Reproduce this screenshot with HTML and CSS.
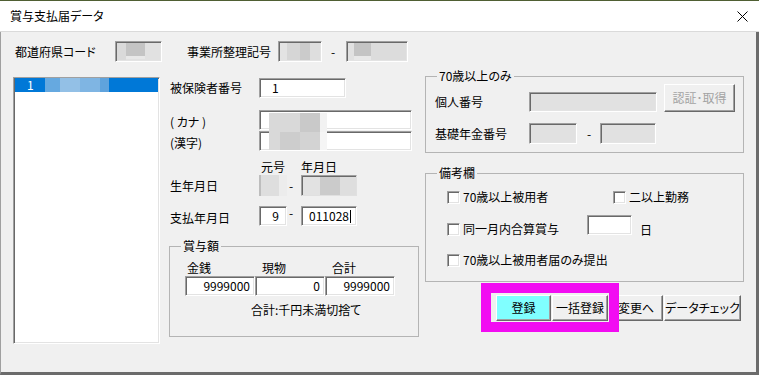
FILE: index.html
```html
<!DOCTYPE html>
<html lang="ja">
<head>
<meta charset="utf-8">
<title>賞与支払届データ</title>
<link rel="stylesheet" href="styles.css">
</head>
<body>
<div class="window">
  <div class="titlebar">
    <span class="title">賞与支払届データ</span>
    <span class="close"><svg width="11" height="11" viewBox="0 0 11 11"><path d="M0.5 0.5L10.5 10.5M10.5 0.5L0.5 10.5" stroke="#000" stroke-width="1" fill="none"/></svg></span>
  </div>
  <div class="client">
    <div class="toprow">
      <span class="lbl w-pref">都道府県コード</span>
      <span class="sunk f-pref"></span>
      <span class="lbl w-office">事業所整理記号</span>
      <span class="sunk f-office"></span>
      <span class="dash d-office">-</span>
      <span class="sunk f-office2"></span>
    </div>
    <div class="main">
      <div class="sunk listbox">
        <div class="item sel"><span class="num">1</span><span class="lb-redact"></span></div>
      </div>

      <div class="mid">
        <div class="row r-ins">
          <span class="lbl w-mid">被保険者番号</span>
          <span class="sunk f-ins">1</span>
        </div>
        <div class="names">
          <div class="nrow"><span class="lbl w-mid">( カナ )</span><span class="sunk f-name"></span></div>
          <div class="nrow"><span class="lbl w-mid">(漢字)</span><span class="sunk f-name"></span></div>
          <div class="name-redact"></div>
        </div>
        <div class="hdr"><span class="h-era">元号</span><span>年月日</span></div>
        <div class="row r-birth">
          <span class="lbl w-mid">生年月日</span>
          <span class="f-era-blur"></span>
          <span class="dash d-date">-</span>
          <span class="sunk f-ymd-blur"></span>
        </div>
        <div class="row r-pay">
          <span class="lbl w-mid l-pay">支払年月日</span>
          <span class="sunk f-era">9</span>
          <span class="dash d-date">-</span>
          <span class="sunk f-ymd">011028<span class="caret"></span></span>
        </div>
        <fieldset class="grp bonus">
          <legend>賞与額</legend>
          <div class="bhead"><span class="bh1">金銭</span><span class="bh2">現物</span><span class="bh3">合計</span></div>
          <div class="bfields">
            <span class="sunk f-amt">9999000</span>
            <span class="sunk f-amt">0</span>
            <span class="sunk f-amt">9999000</span>
          </div>
          <div class="note">合計:千円未満切捨て</div>
        </fieldset>
      </div>

      <div class="right">
        <fieldset class="grp g70">
          <legend>70歳以上のみ</legend>
          <div class="r-kojin">
            <span class="lbl w-right">個人番号</span>
            <span class="sunk dis f-kojin"></span>
            <span class="btn btn-dis b-auth">認証･取得</span>
          </div>
          <div class="r-kiso">
            <span class="lbl w-right">基礎年金番号</span>
            <span class="sunk dis f-kiso1"></span>
            <span class="dash d-kiso">-</span>
            <span class="sunk dis f-kiso2"></span>
          </div>
        </fieldset>
        <fieldset class="grp gnote">
          <legend>備考欄</legend>
          <div class="crow c1">
            <span class="citem ci-wide"><span class="sunk chk"></span>70歳以上被用者</span>
            <span class="citem"><span class="sunk chk"></span>二以上勤務</span>
          </div>
          <div class="crow c2">
            <span class="citem ci-mid"><span class="sunk chk"></span>同一月内合算賞与</span>
            <span class="sunk f-day"></span>
            <span class="day">日</span>
          </div>
          <div class="crow c3">
            <span class="citem"><span class="sunk chk"></span>70歳以上被用者届のみ提出</span>
          </div>
        </fieldset>
        <div class="buttons">
          <span class="btn b-reg">登録</span>
          <span class="btn b-bulk">一括登録</span>
          <span class="btn b-chg">変更へ</span>
          <span class="btn b-chk">データチェック</span>
        </div>
      </div>
    </div>
  </div>
  <div class="highlight"></div>
</div>
</body>
</html>
```

FILE: styles.css
```css
* { box-sizing: border-box; }
html, body { margin: 0; padding: 0; }
body {
  width: 759px;
  height: 375px;
  overflow: hidden;
  background: #fff;
  font-family: "Noto Sans CJK JP", "Noto Sans", sans-serif;
  font-size: 12px;
  line-height: 14px;
  color: #000;
  font-feature-settings: "palt";
}
.window {
  position: relative;
  width: 759px;
  height: 375px;
  display: flex;
  flex-direction: column;
}
.titlebar {
  height: 32px;
  flex: none;
  border-top: 1px solid #4f5f33;
  border-bottom: 1px solid #dadada;
  background: #fff;
  display: flex;
  align-items: center;
  padding-left: 10px;
}
.close {
  margin-left: auto;
  margin-right: 11px;
  width: 11px;
  height: 11px;
  display: flex;
}
.client {
  flex: 1;
  background: #f0f0f0;
  border-left: 1px solid #a0a0a0;
  border-right: 3px solid #6b6b6b;
  border-bottom: 3px solid #6b6b6b;
  padding: 9px 0 0 12px;
}

/* common controls */
.sunk {
  display: block;
  flex: none;
  border: 1px solid;
  border-color: #a0a0a0 #fff #fff #a0a0a0;
  box-shadow: inset 1px 1px 0 #696969, inset -1px -1px 0 #e3e3e3;
  background: #fff;
}
.dis { background: #e1e1e1; }
.lbl { flex: none; white-space: nowrap; }
.dash { flex: none; }
.btn {
  display: block;
  flex: none;
  height: 26px;
  line-height: 24px;
  text-align: center;
  white-space: nowrap;
  background: #f0f0f0;
  border: 1px solid;
  border-color: #fff #696969 #696969 #fff;
  box-shadow: inset -1px -1px 0 #a0a0a0;
}

/* top row */
.toprow {
  display: flex;
  align-items: center;
  height: 21px;
  padding-left: 2px;
}
.w-pref { width: 100px; }
.f-pref {
  width: 47px; height: 21px;
  background:
    linear-gradient(#c4c4c4, #c4c4c4) 10px 1px / 19px 13px no-repeat,
    linear-gradient(#e8e8e8, #e8e8e8) 10px 14px / 19px 3px no-repeat,
    linear-gradient(to right, #dadada 0 10px, #e1e1e1 10px);
}
.w-office { width: 91px; margin-left: 25px; }
.f-office {
  width: 44px; height: 21px;
  background: linear-gradient(to right, #e3e3e3 0 8px, #d6d6d6 8px 21px, #cbcbcb 21px 31px, #dedede 31px);
}
.d-office { width: 24px; padding-left: 9px; }
.f-office2 {
  width: 62px; height: 21px;
  background:
    linear-gradient(#c4c4c4, #c4c4c4) 7px 1px / 17px 13px no-repeat,
    linear-gradient(#e8e8e8, #e8e8e8) 7px 14px / 17px 6px no-repeat,
    linear-gradient(to right, #e1e1e1 0 24px, #dcdcdc 24px);
}

/* main */
.main {
  display: flex;
  align-items: flex-start;
  margin-top: 7px;
}
.listbox {
  width: 147px;
  height: 267px;
  margin-top: 8px;
  padding: 0 1px;
}
.item {
  display: flex;
  height: 14px;
}
.sel { background: #0078d7; color: #fff; padding-left: 12px; }
.num { width: 18px; }
.lb-redact {
  width: 64px;
  height: 14px;
  background: linear-gradient(to right, #66a9e0 0 15px, #93c0e6 15px 35px, #7fb5e3 35px 55px, #5fa3dd 55px 64px);
}

/* middle column */
.mid { width: 250px; margin-left: 9px; flex: none; }
.row { display: flex; align-items: center; padding-left: 1px; }
.w-mid { width: 89px; }
.r-ins { margin-top: 9px; height: 20px; }
.f-ins { width: 87px; height: 20px; line-height: 18px; padding-left: 12px; }

.names { position: relative; margin-top: 12px; }
.nrow { display: flex; height: 20px; padding-left: 1px; }
.nrow + .nrow { margin-top: 1px; }
.nrow .lbl { padding-top: 5px; }
.f-name { width: 153px; height: 20px; }
.name-redact {
  position: absolute;
  left: 100px;
  top: 3px;
  width: 58px;
  height: 37px;
  background:
    linear-gradient(to right, #d9d9d9 0 31px, #c9c9c9 31px 51px, #f2f2f2 51px) top / 100% 19px no-repeat,
    linear-gradient(to right, #d9d9d9 0 11px, #cdcdcd 11px 31px, #d3d3d3 31px 51px, #f5f5f5 51px) bottom / 100% 18px no-repeat;
}

.hdr { display: flex; margin-top: 9px; padding-left: 92px; }
.h-era { width: 40px; }
.r-birth { margin-top: 1px; height: 21px; }
.f-era-blur {
  display: block;
  width: 28px; height: 21px;
  background: linear-gradient(to right, #bdbdbd 0 2px, #dedede 2px 20px, #ececec 20px);
}
.d-date { width: 14px; padding-left: 2px; }
.f-ymd-blur {
  width: 56px; height: 21px;
  border-color: #a0a0a0 #e0e0e0 #e0e0e0 #a0a0a0;
  box-shadow: inset 1px 1px 0 #696969;
  background: linear-gradient(to right, #e2e2e2 0 18px, #cbcbcb 18px 38px, #dedede 38px);
}
.r-pay { margin-top: 10px; height: 20px; align-items: flex-start; }
.l-pay { padding-top: 5px; }
.f-era { width: 28px; height: 20px; line-height: 18px; text-align: right; padding-right: 7px; }
.f-ymd {
  width: 56px; height: 20px; line-height: 18px;
  display: flex; justify-content: flex-end; align-items: center;
  padding-right: 5px;
}
.caret { display: block; width: 1px; height: 13px; background: #000; margin-left: 1px; }

/* group boxes */
.grp {
  margin: 0;
  padding: 0;
  min-width: 0;
  border: 1px solid #b4b4b4;
}
.grp legend {
  margin-left: 11px;
  padding: 0 2px;
  line-height: 14px;
}
.bonus { width: 250px; margin-top: 13px; padding-bottom: 19px; }
.bhead, .bfields {
  display: grid;
  grid-template-columns: 70px 70px 70px;
  margin-left: 15px;
}
.bhead { margin-top: 8px; }
.bh1 { padding-left: 2px; }
.bh2, .bh3 { padding-left: 7px; }
.bfields { margin-top: 1px; }
.f-amt { height: 20px; line-height: 18px; text-align: right; padding-right: 4px; }
.note { margin-left: 81px; margin-top: 7px; }

/* right column */
.right { width: 319px; margin-left: 6px; flex: none; }
.g70 { padding: 0 0 8px 0; }
.g70 > div { margin-left: 9px; }
.w-right { width: 94px; }
.r-kojin { display: flex; align-items: flex-end; margin-top: 1px; }
.r-kojin .lbl { line-height: 20px; }
.f-kojin { width: 128px; height: 20px; }
.b-auth { width: 71px; height: 28px; line-height: 26px; margin-left: 7px; color: #a3a3a3; }
.r-kiso { display: flex; align-items: center; margin-top: 11px; height: 21px; }
.f-kiso1 { width: 48px; height: 21px; }
.d-kiso { width: 23px; padding-left: 10px; }
.f-kiso2 { width: 56px; height: 21px; }

.gnote { margin-top: 13px; padding: 0 0 14px 0; }
.crow { display: flex; margin-left: 21px; }
.c1 { margin-top: 10px; height: 14px; align-items: center; }
.c2 { margin-top: 11px; height: 21px; align-items: flex-end; }
.c3 { margin-top: 17px; height: 14px; align-items: center; }
.citem { display: flex; align-items: center; white-space: nowrap; flex: none; }
.ci-wide { width: 166px; }
.ci-mid { width: 140px; }
.chk { width: 13px; height: 13px; margin-right: 3px; }
.f-day { width: 45px; height: 20px; margin-bottom: 1px; }
.day { margin-left: 8px; margin-bottom: -1px; }

.buttons {
  display: flex;
  justify-content: flex-end;
  gap: 1px;
  margin-top: 13px;
  padding-right: 3px;
}
.b-reg { width: 55px; background: #80ffff; }
.b-bulk { width: 56px; }
.b-chg { width: 54px; }
.b-chk { width: 77px; }

.highlight {
  position: absolute;
  left: 481px;
  top: 283px;
  width: 138px;
  height: 49px;
  border: 10px solid #f20cf2;
}
```
